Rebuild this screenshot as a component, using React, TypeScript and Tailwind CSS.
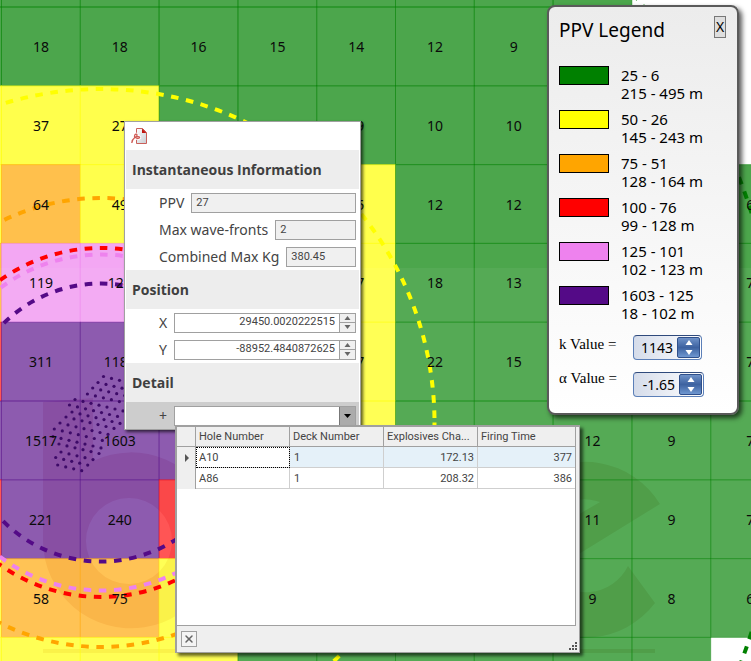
import React from "react";
import { X } from "lucide-react";

const STEP = 78.8;
const ORIGIN_X = 1.5;
const ORIGIN_Y = 7;

const fills: any = {
  g: "#008000",
  y: "#ffff00",
  o: "#ffa500",
  r: "#ff0000",
  v: "#ee82ee",
  p: "#540a87",
};

// one letter per cell, first row and first column are cut by the edge of the map
const cells = [
  "ggggggggg..",
  "ggggggggg..",
  "yyygggggg..",
  "yoyyyyggggg",
  "ovvvyyggggg",
  "rpppryggggg",
  "ppppryggggg",
  "rpprryggggg",
  "yooyyyggggg",
  "yyyyggggggg",
];
// white corner in the last row
const isEmpty = (row: number, col: number) => row === 9 && col === 10;

const values = [
  ["18", "18", "16", "15", "14", "12", "9"],
  ["37", "27", "27", "24", "19", "10", "10"],
  ["64", "49", "", "", "35", "12", "12", "", "", "6"],
  ["119", "124", "", "", "27", "18", "13", "", "", "7"],
  ["311", "1180", "", "", "37", "22", "15", "", "", "7"],
  ["1517", "1603", "", "", "", "", "", "12", "9", "7"],
  ["221", "240", "", "", "", "", "", "11", "9", "7"],
  ["58", "75", "", "", "", "", "", "9", "8", "6"],
];

const contours = [
  { r: 139, color: "#540a87" },
  { r: 168, color: "#ee82ee" },
  { r: 174.5, color: "#ff0000" },
  { r: 224.5, color: "#ffa500" },
  { r: 333.5, color: "#ffff00" },
  { r: 683.5, color: "#008000" },
];

// blast holes: start x, start y, count
const holes = [
  [103.5, 376.5, 3],
  [98, 382.5, 4],
  [92.7, 388, 5],
  [87.4, 394, 5],
  [75, 399.5, 7],
  [69.5, 405, 7],
  [72, 412, 7],
  [66, 417, 7],
  [60, 423, 7],
  [54.3, 429, 7],
  [53, 436.5, 7],
  [59, 444, 6],
  [61, 452, 5],
  [55.7, 457.5, 5],
  [57.7, 465, 4],
];

const legend = [
  { swatch: "bg-[#008000]", range: "25 - 6", distance: "215 - 495 m" },
  { swatch: "bg-[#ffff00]", range: "50 - 26", distance: "145 - 243 m" },
  { swatch: "bg-[#ffa500]", range: "75 - 51", distance: "128 - 164 m" },
  { swatch: "bg-[#ff0000]", range: "100 - 76", distance: "99 - 128 m" },
  { swatch: "bg-[#ee82ee]", range: "125 - 101", distance: "102 - 123 m" },
  { swatch: "bg-[#540a87]", range: "1603 - 125", distance: "18 - 102 m" },
];

const holeRows = [
  { hole: "A10", deck: "1", charge: "172.13", time: "377" },
  { hole: "A86", deck: "1", charge: "208.32", time: "386" },
];

const HeatMap = () => {
  return (
    <svg className="absolute inset-0 h-full w-full" aria-label="PPV heat map">
      {/* watermark under the cells */}
      <g fill="#eed2d8">
        <path d="M43 402 L93 398 V461 A88 88 0 1 1 43 541 Z M129 498 A43 43 0 1 0 129 584 A43 43 0 1 0 129 498 Z" fillRule="evenodd" />
        <path d="M660 504 A88 88 0 1 0 655 603 L628 566 A47 47 0 0 1 548 573 Z M600 502 A47 47 0 0 0 538 538 Z" fillRule="evenodd" />
        <rect x="43" y="649" width="612" height="4" />
      </g>
      {cells.map((row, r) =>
        row.split("").map((c, i) =>
          c === "." || isEmpty(r, i) ? null : (
            <rect
              key={`${r}-${i}`}
              x={ORIGIN_X + (i - 1) * STEP}
              y={ORIGIN_Y + (r - 1) * STEP}
              width={STEP}
              height={STEP}
              fill={fills[c]}
              fillOpacity="0.7"
              stroke={fills[c]}
              strokeOpacity="0.45"
            />
          )
        )
      )}
      <rect x="0" y="268" width="100%" height="100%" fill="#fff" fillOpacity="0.05" />
      <g fill="#3d0a68">
        {holes.map(([x, y, n]) =>
          Array.from({ length: n }, (_, i) => (
            <circle key={`${x}-${i}`} cx={x + i * 8} cy={y + i * 1.9} r="1.6" />
          ))
        )}
      </g>
      <g fill="none" strokeWidth="4" strokeDasharray="7.6 7.6">
        {contours.map((c) => (
          <circle key={c.r} cx="101" cy="422.5" r={c.r} stroke={c.color} />
        ))}
      </g>
      <g className="font-['Noto_Sans',sans-serif] text-[14px]" fill="#0a0a0a" textAnchor="middle">
        {values.map((row, r) =>
          row.map((v, i) =>
            v ? (
              <text key={`${r}-${i}`} x={41 + i * STEP} y={52 + r * STEP}>
                {v}
              </text>
            ) : null
          )
        )}
      </g>
    </svg>
  );
};

const BlueSpinner = ({ id, value, width }: { id: string; value: string; width: string }) => {
  return (
    <div
      className={`flex h-[25px] items-center rounded border border-[#5b7fb8] border-t-[#2f4a7c] bg-linear-to-r from-[#d5dcea] to-white p-px ${width}`}
    >
      <input
        id={id}
        defaultValue={value}
        className="w-full min-w-0 flex-1 bg-transparent pr-1 text-right text-[14px] text-black outline-none"
      />
      <div className="flex h-[21px] w-[23px] flex-col rounded-xs border border-[#2f4f8a] bg-linear-to-b from-[#6f92c8] via-[#3d62a0] to-[#6f97d0]">
        <button aria-label="Increase" className="flex flex-1 items-center justify-center">
          <svg width="8" height="5" viewBox="0 0 8 5">
            <path d="M4 0 L7.5 5 H0.5 Z" fill="#fff" />
          </svg>
        </button>
        <button aria-label="Decrease" className="flex flex-1 items-center justify-center">
          <svg width="8" height="5" viewBox="0 0 8 5">
            <path d="M4 5 L7.5 0 H0.5 Z" fill="#fff" />
          </svg>
        </button>
      </div>
    </div>
  );
};

const Legend = () => {
  return (
    <aside className="absolute top-[5px] right-3 w-48 rounded-lg border-2 border-[#5a5a5a] bg-linear-to-b from-[#ececec] to-white px-[10px] pb-4 font-['Noto_Sans',sans-serif] text-[15px] text-black shadow-[3px_3px_5px_rgba(0,0,0,0.65)]">
      <div className="flex items-start justify-between pt-[9px] pr-px">
        <h2 className="text-[19px] leading-[28px]">PPV Legend</h2>
        <button
          className="h-[22px] w-3 border border-[#777] bg-[#dedede] text-[14px] leading-5"
          aria-label="Close legend"
        >
          X
        </button>
      </div>
      <ul className="mt-[22px]">
        {legend.map((item) => (
          <li key={item.range} className="flex h-11 gap-3">
            <span className={`h-[19px] w-[50px] border border-black ${item.swatch}`}></span>
            <span className="leading-[18px]">
              {item.range}
              <br />
              {item.distance}
            </span>
          </li>
        ))}
      </ul>
      <div className="mt-[5px] flex justify-between">
        <div className="flex flex-col gap-4 font-['Liberation_Serif',serif] text-[15px] leading-[18px]">
          <label htmlFor="k-value">k Value =</label>
          <label htmlFor="a-value">α Value =</label>
        </div>
        <div className="flex w-[94px] flex-col gap-3">
          <BlueSpinner id="k-value" value="1143" width="w-[69px]" />
          <BlueSpinner id="a-value" value="-1.65" width="w-[71px]" />
        </div>
      </div>
    </aside>
  );
};

const SectionTitle = ({ children }: { children: React.ReactNode }) => {
  return (
    <h3 className="h-[39px] bg-[#ededed] pl-[6px] font-['Open_Sans',sans-serif] text-[14px] leading-[39px] font-bold text-[#3f3f3f]">
      {children}
    </h3>
  );
};

const InfoRow = ({ id, label, value }: { id: string; label: string; value: string }) => {
  return (
    <div className="flex h-[27px] items-center gap-[7px] pr-[3px] pl-[33px]">
      <label htmlFor={id} className="text-[14px] whitespace-nowrap">
        {label}
      </label>
      <input
        id={id}
        readOnly
        value={value}
        className="h-5 w-full min-w-0 flex-1 border border-[#a0a0a0] bg-[#f0f0f0] px-1 font-[Roboto,sans-serif] text-[11px] outline-none"
      />
    </div>
  );
};

const PositionRow = ({ id, label, value }: { id: string; label: string; value: string }) => {
  return (
    <div className="flex h-[27px] items-center gap-[7px] pr-[3px] pl-[33px]">
      <label htmlFor={id} className="text-[14px]">
        {label}
      </label>
      <div className="flex h-5 flex-1 border border-[#a0a0a0] bg-white">
        <input
          id={id}
          defaultValue={value}
          className="w-full min-w-0 flex-1 px-1 text-right font-[Roboto,sans-serif] text-[11px] outline-none"
        />
        <div className="flex w-4 flex-col divide-y divide-[#a0a0a0] border-l border-[#a0a0a0] bg-[#f0f0f0]">
          <button aria-label="Increase" className="flex flex-1 items-center justify-center">
            <svg width="7" height="4" viewBox="0 0 7 4">
              <path d="M3.5 0 L6.5 4 H0.5 Z" fill="#666" />
            </svg>
          </button>
          <button aria-label="Decrease" className="flex flex-1 items-center justify-center">
            <svg width="7" height="4" viewBox="0 0 7 4">
              <path d="M3.5 4 L6.5 0 H0.5 Z" fill="#666" />
            </svg>
          </button>
        </div>
      </div>
    </div>
  );
};

const InfoPanel = () => {
  return (
    <section className="absolute top-[121px] left-[124px] w-[237px] border border-[#a0a0a0] bg-white px-px font-['Noto_Sans',sans-serif] text-[#444] shadow-[2px_2px_3px_rgba(0,0,0,0.65)]">
      <div className="flex h-7 items-center pl-[5px]">
        <button aria-label="Export to PDF">
          <svg width="16" height="16" viewBox="0 0 16 16" fill="none">
            <defs>
              <linearGradient id="page" x1="0" y1="0" x2="1" y2="1">
                <stop offset="0" stopColor="#fff" />
                <stop offset="1" stopColor="#c8ccd2" />
              </linearGradient>
            </defs>
            <path d="M5.5 0.5 H11.5 L15.5 4.5 V15.5 H5.5 Z" fill="url(#page)" stroke="#c9605a" />
            <path d="M11 0.5 V5 H15.5 Z" fill="#c0150f" />
            <path
              d="M0.8 15 C1 12.5 2 10.8 3.8 9.5 C3 7.5 4 6 5.4 6.2 C6.6 6.6 6 8.5 4.2 9.6 C5.4 8.6 8 8 8.6 9.2 C8.8 10.8 6 10.8 4.6 9.8"
              stroke="#fff"
              strokeWidth="3"
            />
            <path
              d="M0.8 15 C1 12.5 2 10.8 3.8 9.5 C3 7.5 4 6 5.4 6.2 C6.6 6.6 6 8.5 4.2 9.6 C5.4 8.6 8 8 8.6 9.2 C8.8 10.8 6 10.8 4.6 9.8"
              stroke="#cf5a54"
              strokeWidth="1.3"
            />
          </svg>
        </button>
      </div>
      <SectionTitle>Instantaneous Information</SectionTitle>
      <InfoRow id="ppv" label="PPV" value="27" />
      <InfoRow id="wave-fronts" label="Max wave-fronts" value="2" />
      <InfoRow id="max-kg" label="Combined Max Kg" value="380.45" />
      <SectionTitle>Position</SectionTitle>
      <PositionRow id="pos-x" label="X" value="29450.0020222515" />
      <PositionRow id="pos-y" label="Y" value="-88952.4840872625" />
      <SectionTitle>Detail</SectionTitle>
      <div className="flex h-[27px] items-center gap-[7px] bg-[#cdcdcd] pr-[3px] pl-[33px]">
        <label htmlFor="detail" className="text-[14px]">
          +
        </label>
        <div className="flex h-5 flex-1 border border-[#a0a0a0] bg-white">
          <input id="detail" className="w-full min-w-0 flex-1 px-1 text-[11px] outline-none" />
          <button
            aria-label="Open detail list"
            className="flex w-4 items-center justify-center border-l border-[#777] bg-[#ababab]"
          >
            <svg width="7" height="4" viewBox="0 0 7 4">
              <path d="M0 0 H7 L3.5 4 Z" fill="#000" />
            </svg>
          </button>
        </div>
      </div>
    </section>
  );
};

const HolePopup = () => {
  return (
    <section className="absolute top-[425px] left-[175px] w-[405px] border-t-2 border-r border-b border-l-2 border-[#a0a0a0] bg-[#efefef] font-[Roboto,sans-serif] text-[11px] text-[#444] shadow-[3px_3px_3px_rgba(0,0,0,0.6)]">
      <div className="mr-[3px] h-[199px] border-r border-b border-[#a0a0a0] bg-white">
        <table className="w-full table-fixed border-separate border-spacing-0 leading-4">
          <thead>
            <tr className="h-5 bg-[#efefef] text-left">
              <th className="w-[19px] border-r border-b border-[#a0a0a0]"></th>
              <th className="w-[94px] border-r border-b border-[#a0a0a0] px-[3px] pt-px font-normal">Hole Number</th>
              <th className="w-[94px] border-r border-b border-[#a0a0a0] px-[3px] pt-px font-normal">Deck Number</th>
              <th className="w-[94px] border-r border-b border-[#a0a0a0] px-[3px] pt-px font-normal whitespace-nowrap">
                Explosives Cha...
              </th>
              <th className="border-b border-[#a0a0a0] px-[3px] pt-px font-normal">Firing Time</th>
            </tr>
          </thead>
          <tbody>
            {holeRows.map((row, i) => (
              <tr key={row.hole} className={`h-[21px] ${i === 0 ? "bg-[#e5f1f9]" : "bg-white"}`}>
                <td className="border-r border-[#a0a0a0] bg-[#efefef]">
                  {i === 0 && (
                    <svg className="mr-[6px] ml-auto" width="4" height="8" viewBox="0 0 4 8">
                      <path d="M0 0 L4 4 L0 8 Z" fill="#555" />
                    </svg>
                  )}
                </td>
                <td
                  className={`border-r border-b border-[#cfcfcf] px-[3px] pt-px ${
                    i === 0 ? "bg-white outline-1 -outline-offset-1 outline-dotted outline-black" : ""
                  }`}
                >
                  {row.hole}
                </td>
                <td className="border-r border-b border-[#cfcfcf] px-1 pt-px">{row.deck}</td>
                <td className="border-r border-b border-[#cfcfcf] px-[3px] pt-px text-right">{row.charge}</td>
                <td className="border-b border-[#cfcfcf] px-[3px] pt-px text-right">{row.time}</td>
              </tr>
            ))}
          </tbody>
        </table>
      </div>
      <div className="flex h-[26px] items-center justify-between pl-1">
        <button
          aria-label="Close"
          className="flex h-4 w-4 items-center justify-center border border-[#a0a0a0] bg-[#f4f4f4]"
        >
          <X size={12} strokeWidth={3} color="#666" />
        </button>
        <svg className="self-end" width="10" height="10" viewBox="0 0 10 10" fill="#555">
          <path d="M6 0h2v2h-2z M3 3h2v2h-2z M6 3h2v2h-2z M0 6h2v2h-2z M3 6h2v2h-2z M6 6h2v2h-2z" />
        </svg>
      </div>
    </section>
  );
};

const App = () => {
  return (
    <main className="relative h-screen w-full overflow-hidden bg-white">
      <HeatMap />
      <Legend />
      <InfoPanel />
      <HolePopup />
    </main>
  );
};

export default App;
